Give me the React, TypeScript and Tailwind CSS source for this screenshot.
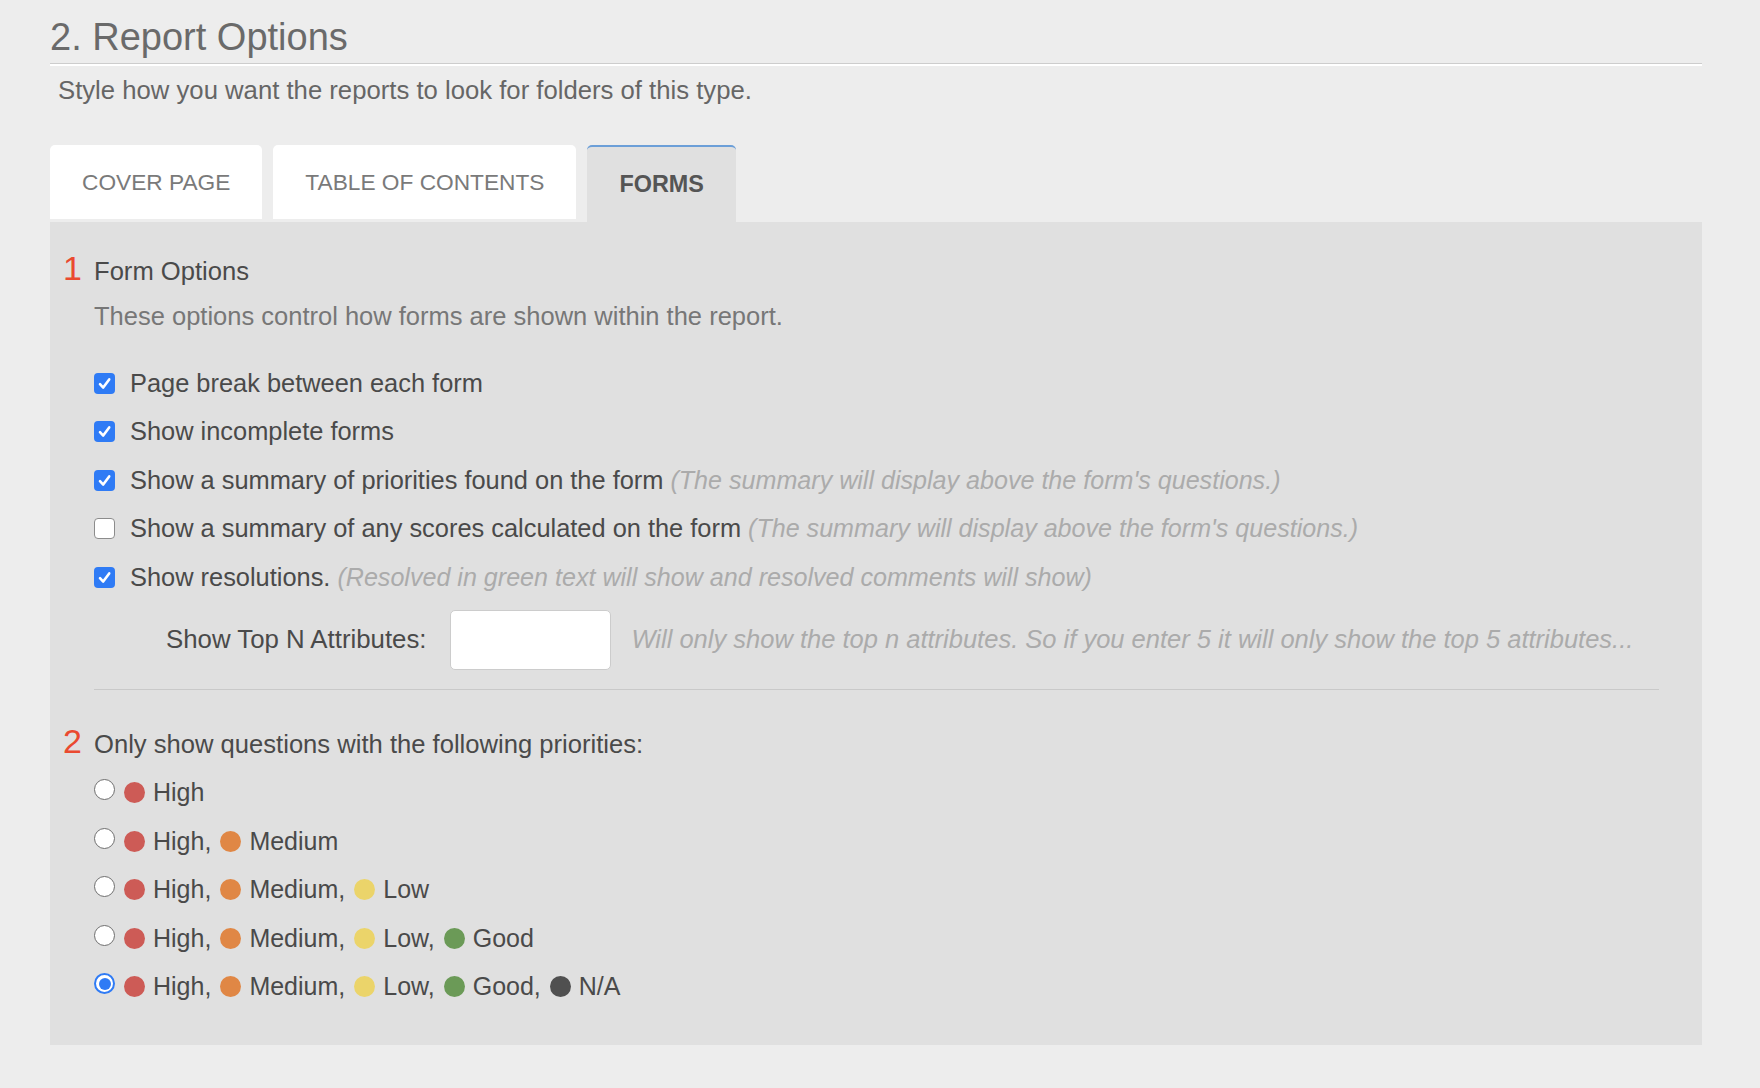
import React from "react";

type FormOption = { on: boolean; label: string; hint?: string };

const formOptions: FormOption[] = [
  { on: true, label: "Page break between each form" },
  { on: true, label: "Show incomplete forms" },
  {
    on: true,
    label: "Show a summary of priorities found on the form",
    hint: "(The summary will display above the form's questions.)",
  },
  {
    on: false,
    label: "Show a summary of any scores calculated on the form",
    hint: "(The summary will display above the form's questions.)",
  },
  {
    on: true,
    label: "Show resolutions.",
    hint: "(Resolved in green text will show and resolved comments will show)",
  },
];

const levels: { name: string; color: string }[] = [
  { name: "High", color: "#cd5b56" },
  { name: "Medium", color: "#e08745" },
  { name: "Low", color: "#ebd46a" },
  { name: "Good", color: "#6b9a57" },
  { name: "N/A", color: "#505050" },
];

function Checkbox({ on }: { on: boolean }) {
  if (!on) {
    return <span className="h-[21px] w-[21px] shrink-0 rounded-[4px] border border-[#8c8c8c] bg-white" />;
  }
  return (
    <span className="flex h-[21px] w-[21px] shrink-0 items-center justify-center rounded-[4px] bg-[#2f7bf5]">
      <svg viewBox="0 0 21 21" className="h-[21px] w-[21px]">
        <path
          d="M6 11.2 L9.2 14.6 L15.2 6.4"
          fill="none"
          stroke="#ffffff"
          strokeWidth="2.6"
          strokeLinecap="round"
          strokeLinejoin="round"
        />
      </svg>
    </span>
  );
}

function Radio({ on }: { on: boolean }) {
  if (on) {
    return (
      <span className="mb-[6px] flex h-[21px] w-[21px] shrink-0 items-center justify-center rounded-full border-[2px] border-[#2f7bf5] bg-white">
        <span className="h-[12px] w-[12px] rounded-full bg-[#2f7bf5]" />
      </span>
    );
  }
  return <span className="mb-[6px] h-[21px] w-[21px] shrink-0 rounded-full border border-[#6f6f6f] bg-white" />;
}

function SectionTitle({ num, children }: { num: string; children: React.ReactNode }) {
  return (
    <div className="flex items-baseline">
      <span className="w-[31px] shrink-0 text-[34px] leading-[40px] text-[#ea4a30]">{num}</span>
      <span className="text-[25.6px] leading-[35px] text-[#4a4a4a]">{children}</span>
    </div>
  );
}

export default function App() {
  return (
    <div className="min-h-screen bg-[#ededed] font-['Liberation_Sans',Arial,Helvetica,sans-serif]">
      <div className="ml-[50px] mr-[58px] pt-[17px]">
        {/* Page heading with engraved rule */}
        <div className="border-b border-[#cdcdcd] pb-[6px]">
          <h2 className="text-[38px] leading-[40px] text-[#6a6a6a]">2. Report Options</h2>
        </div>
        <div className="h-[2px] bg-white" />
        <p className="mt-[6px] pl-[8px] text-[25.7px] leading-[36px] text-[#666666]">
          Style how you want the reports to look for folders of this type.
        </p>

        {/* Tabs */}
        <div className="mt-[37px] flex h-[77px] items-start gap-[11px]">
          <div className="flex h-[74px] items-center rounded-t-[5px] bg-white px-[32px] text-[22.7px] text-[#7a7a7a]">
            COVER PAGE
          </div>
          <div className="flex h-[74px] items-center rounded-t-[5px] bg-white px-[32px] text-[22.7px] text-[#7a7a7a]">
            TABLE OF CONTENTS
          </div>
          <div className="flex h-[77px] items-center rounded-t-[5px] border-t-[2px] border-[#6c9fd8] bg-[#e0e0e0] px-[32px] text-[23.4px] font-bold text-[#555555]">
            FORMS
          </div>
        </div>

        {/* Forms tab panel */}
        <div className="bg-[#e0e0e0] pb-[34px] pl-[13px] pr-[43px] pt-[26px]">
          <SectionTitle num="1">Form Options</SectionTitle>
          <div className="ml-[31px]">
            <p className="mt-[10px] text-[25.5px] leading-[35px] text-[#777777]">
              These options control how forms are shown within the report.
            </p>

            <div className="mt-[25px] flex flex-col">
              {formOptions.map((o) => (
                <div key={o.label} className="flex h-[48.5px] items-center gap-[15px]">
                  <Checkbox on={o.on} />
                  <span className="whitespace-nowrap text-[25.4px] leading-[35px] text-[#4a4a4a]">
                    {o.label}
                    {o.hint && <span className="text-[25.1px] italic text-[#ababab]"> {o.hint}</span>}
                  </span>
                </div>
              ))}
            </div>

            <div className="mt-[8px] flex h-[60px] items-center">
              <span className="ml-[72px] text-[25.8px] leading-[35px] text-[#4a4a4a]">Show Top N Attributes:</span>
              <input
                type="text"
                className="ml-[23px] h-[60px] w-[161px] rounded-[5px] border border-[#cccccc] bg-white outline-none"
              />
              <span className="ml-[21px] whitespace-nowrap text-[25.5px] italic leading-[35px] text-[#ababab]">
                Will only show the top n attributes. So if you enter 5 it will only show the top 5 attributes...
              </span>
            </div>

            <div className="mt-[19px] h-px bg-[#c9c9c9]" />
          </div>

          <div className="mt-[31px]">
            <SectionTitle num="2">Only show questions with the following priorities:</SectionTitle>
          </div>

          <div className="ml-[31px] mt-[7px] flex flex-col">
            {levels.map((_, i) => {
              const set = levels.slice(0, i + 1);
              return (
                <div key={i} className="flex h-[48.5px] items-center">
                  <Radio on={i === levels.length - 1} />
                  <div className="ml-[9px] flex items-center gap-[9px]">
                    {set.map((lv, j) => (
                      <span key={lv.name} className="flex items-center gap-[8px]">
                        <span className="h-[21px] w-[21px] rounded-full" style={{ backgroundColor: lv.color }} />
                        <span className="whitespace-nowrap text-[25px] leading-[35px] text-[#4a4a4a]">
                          {lv.name}
                          {j < set.length - 1 ? "," : ""}
                        </span>
                      </span>
                    ))}
                  </div>
                </div>
              );
            })}
          </div>
        </div>
      </div>
    </div>
  );
}
